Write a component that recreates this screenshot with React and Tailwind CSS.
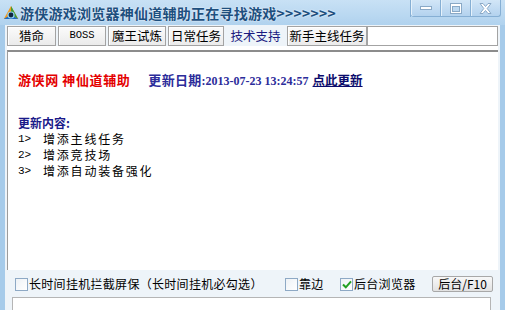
import React from "react";

const CJK = "font-['Noto_Sans_CJK_SC','Noto_Sans',sans-serif]";

function Logo() {
  return (
    <svg width="16" height="16" viewBox="0 0 16 16">
      <path d="M8 1 L15.2 14 L0.8 14 Z" fill="#f39a1e" />
      <path d="M8 1 L15.2 14 L8 9.5 Z" fill="#3f9d36" />
      <path d="M0.8 14 L15.2 14 L8 9.5 Z" fill="#1f6cc4" />
      <circle cx="8" cy="10" r="3.6" fill="#8fd0f2" />
      <circle cx="8" cy="10" r="2.4" fill="#0f2740" />
    </svg>
  );
}

function WinButtons() {
  const base =
    "w-[30px] h-[17px] flex items-center justify-center bg-gradient-to-b from-[#d2e6f7] to-[#b3d2ee] border-r border-b border-[#86afd4] shadow-[inset_1px_0_0_#e6f2fb]";
  return (
    <div className="absolute top-0 right-[4px] flex border-l border-[#86afd4]">
      <div className={base + " w-[29px] rounded-bl-[3px]"}>
        <svg width="12" height="6" viewBox="0 0 12 6">
          <rect x="0.5" y="1.5" width="11" height="3" fill="#fff" stroke="#8aa9c6" />
        </svg>
      </div>
      <div className={base}>
        <svg width="12" height="11" viewBox="0 0 12 11">
          <rect x="0.5" y="0.5" width="11" height="10" fill="#fff" stroke="#8aa9c6" />
          <rect x="2.5" y="3.5" width="7" height="5" fill="#bcd8f0" stroke="#8aa9c6" />
        </svg>
      </div>
      <div className={base + " rounded-br-[3px]"}>
        <svg width="13" height="11" viewBox="0 0 13 11">
          <path
            d="M1 0.5 H4 L6.5 3.5 L9 0.5 H12 L8.2 5.5 L12 10.5 H9 L6.5 7.5 L4 10.5 H1 L4.8 5.5 Z"
            fill="#fff"
            stroke="#8aa9c6"
          />
        </svg>
      </div>
    </div>
  );
}

function Tab({ w, children, mono }) {
  return (
    <div
      className={
        "h-[20px] flex items-center justify-center border border-[#a3a3a3] bg-gradient-to-b from-[#fbfbfb] to-[#ebebeb] shadow-[inset_1px_1px_0_#ffffff] text-black " +
        (mono ? "font-['Liberation_Mono',monospace] text-[10.5px]" : "text-[12.5px]")
      }
      style={{ width: w }}
    >
      {children}
    </div>
  );
}

function Check({ checked }) {
  return (
    <div className="w-[13px] h-[13px] shrink-0 border border-[#8ea9c5] bg-gradient-to-br from-[#eef2f6] to-white flex items-center justify-center">
      {checked && (
        <svg width="10" height="9" viewBox="0 0 10 9">
          <path d="M1 4.5 L3.8 7.3 L9 1.3" fill="none" stroke="#22a022" strokeWidth="2" />
        </svg>
      )}
    </div>
  );
}

export default function App() {
  return (
    <div className={"w-[505px] h-[310px] overflow-hidden flex flex-col bg-[#a6cbea] " + CJK}>
      {/* title bar */}
      <div className="relative h-[25px] shrink-0 flex items-center pl-[3px] bg-gradient-to-b from-[#c8e1f5] to-[#b0d2ee]">
        <Logo />
        <span className="ml-[1px] text-[14px] font-bold tracking-[0.25px] text-[#1d4f7e] leading-none [text-shadow:0_0_2px_#ffffff]">
          游侠游戏浏览器神仙道辅助正在寻找游戏&gt;&gt;&gt;&gt;&gt;&gt;&gt;
        </span>
        <WinButtons />
      </div>

      {/* client */}
      <div className="flex-1 mx-[5px] bg-[#eef4f9] flex flex-col">
        {/* tabs */}
        <div className="flex gap-[2px] pl-[2px] pr-[2px] pt-[1px] h-[21px]">
          <Tab w={49}>猎命</Tab>
          <Tab w={48} mono>BOSS</Tab>
          <Tab w={58}>魔王试炼</Tab>
          <Tab w={56}>日常任务</Tab>
          <div className="w-[59px] h-[20px] flex items-center justify-center text-[12.5px] text-[#1a1a80]">
            技术支持
          </div>
          <Tab w={80}>新手主线任务</Tab>
          <div className="flex-1 -ml-[2px] h-[20px] border border-[#a3a3a3] bg-white" />
        </div>

        {/* tab page */}
        <div className="mx-[2px] bg-white pt-[4px] h-[224px] flex flex-col">
          <div className="flex-1 border-t-2 border-t-[#8c8c8c] border-l border-l-[#9c9c9c] bg-white pl-[10px] pt-[20px]">
            <div className="flex items-baseline h-[16px] leading-[16px] whitespace-nowrap">
              <span className="text-[13px] font-bold tracking-[0.6px] text-[#e40000]">游侠网 神仙道辅助</span>
              <span className="ml-[18px] text-[13px] font-bold tracking-[0.3px] text-[#2c2c9a]">更新日期</span>
              <span className="text-[12px] font-bold text-[#2c2c9a] font-['Liberation_Serif',serif]">
                :2013-07-23 13:24:57
              </span>
              <span className="ml-[4px] text-[12.5px] font-bold text-[#0b0b6c] underline">点此更新</span>
            </div>
            <div className="mt-[27px] text-[12px] font-bold text-[#1a1a8a] leading-[16px]">更新内容:</div>
            {["增添主线任务", "增添竞技场", "增添自动装备强化"].map((t, i) => (
              <div key={i} className="flex items-center h-[16px] text-black">
                <span className="w-[25px] font-['Liberation_Mono',monospace] text-[11px]">{i + 1}&gt;</span>
                <span className="text-[12px] tracking-[1.8px]">{t}</span>
              </div>
            ))}
          </div>
        </div>

        {/* bottom options */}
        <div className="flex items-center h-[26px] pl-[10px] pt-[2px] text-[12px] text-black whitespace-nowrap">
          <Check />
          <span className="ml-[1px] w-[256px] tracking-[0.3px]">长时间挂机拦截屏保（长时间挂机必勾选）</span>
          <Check />
          <span className="ml-[1px] w-[41px] tracking-[0.3px]">靠边</span>
          <Check checked />
          <span className="ml-[1px] w-[78px] tracking-[0.3px]">后台浏览器</span>
          <div className="w-[61px] h-[16px] flex items-center justify-center border border-[#a8a8a8] rounded-[2px] bg-gradient-to-b from-[#f8f8f8] to-[#e2e2e2]">
            后台/F10
          </div>
        </div>
        <div className="ml-[7px] mr-[9px] mt-[1px] flex-1 border border-[#b5b5b5] border-b-0 bg-white" />
      </div>
    </div>
  );
}
